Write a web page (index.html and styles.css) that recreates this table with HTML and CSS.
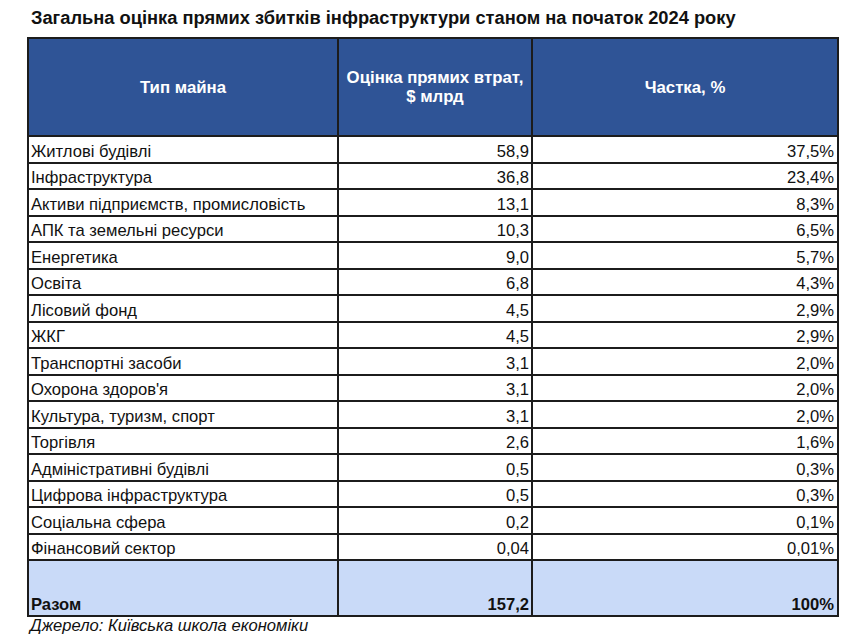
FILE: index.html
```html
<!DOCTYPE html>
<html lang="uk">
<head>
<meta charset="utf-8">
<title>Загальна оцінка прямих збитків інфраструктури</title>
<link rel="stylesheet" href="styles.css">
</head>
<body>
<div class="page">
  <h1 class="title">Загальна оцінка прямих збитків інфраструктури станом на початок 2024 року</h1>
  <div class="grid">
    <div class="hd">Тип майна</div>
    <div class="hd">Оцінка прямих втрат,<br>$ млрд</div>
    <div class="hd">Частка, %</div>

    <div class="c">Житлові будівлі</div><div class="c n">58,9</div><div class="c p">37,5%</div>
    <div class="c">Інфраструктура</div><div class="c n">36,8</div><div class="c p">23,4%</div>
    <div class="c">Активи підприємств, промисловість</div><div class="c n">13,1</div><div class="c p">8,3%</div>
    <div class="c">АПК та земельні ресурси</div><div class="c n">10,3</div><div class="c p">6,5%</div>
    <div class="c">Енергетика</div><div class="c n">9,0</div><div class="c p">5,7%</div>
    <div class="c">Освіта</div><div class="c n">6,8</div><div class="c p">4,3%</div>
    <div class="c">Лісовий фонд</div><div class="c n">4,5</div><div class="c p">2,9%</div>
    <div class="c">ЖКГ</div><div class="c n">4,5</div><div class="c p">2,9%</div>
    <div class="c">Транспортні засоби</div><div class="c n">3,1</div><div class="c p">2,0%</div>
    <div class="c">Охорона здоров'я</div><div class="c n">3,1</div><div class="c p">2,0%</div>
    <div class="c">Культура, туризм, спорт</div><div class="c n">3,1</div><div class="c p">2,0%</div>
    <div class="c">Торгівля</div><div class="c n">2,6</div><div class="c p">1,6%</div>
    <div class="c">Адміністративні будівлі</div><div class="c n">0,5</div><div class="c p">0,3%</div>
    <div class="c">Цифрова інфраструктура</div><div class="c n">0,5</div><div class="c p">0,3%</div>
    <div class="c">Соціальна сфера</div><div class="c n">0,2</div><div class="c p">0,1%</div>
    <div class="c">Фінансовий сектор</div><div class="c n">0,04</div><div class="c p">0,01%</div>

    <div class="c tot">Разом</div><div class="c n tot">157,2</div><div class="c p tot">100%</div>
  </div>
  <div class="source">Джерело: Київська школа економіки</div>
</div>
</body>
</html>
```

FILE: styles.css
```css
html, body {
  margin: 0;
  padding: 0;
  background: #ffffff;
}

.page {
  font-family: "Liberation Sans", Arial, sans-serif;
  color: #111111;
  padding: 7px 0 0 27px;
}

.title {
  margin: 0 0 0 4px;
  font-size: 18.3px;
  font-weight: bold;
  line-height: 21px;
  height: 30px;
  color: #111111;
}

.grid {
  display: grid;
  width: 812px;
  box-sizing: border-box;
  grid-template-columns: 308px 192px 304px;
  grid-template-rows: 96px repeat(16, 24.5px) 54px;
  gap: 2px;
  padding: 2px;
  background: #1c1c1c;
}

.hd {
  background: #2f5496;
  color: #ffffff;
  font-weight: bold;
  font-size: 16.8px;
  line-height: 19px;
  display: flex;
  align-items: center;
  justify-content: center;
  text-align: center;
}

.c {
  background: #ffffff;
  font-size: 16.6px;
  line-height: 18px;
  display: flex;
  align-items: flex-end;
  padding: 0 2px 1px 2px;
  white-space: nowrap;
}

.n {
  justify-content: flex-end;
}

.p {
  justify-content: flex-end;
  padding-right: 3px;
}

.tot {
  background: #c9daf8;
  font-weight: bold;
  padding-bottom: 1px;
}

.source {
  font-style: italic;
  font-size: 16.6px;
  line-height: 18px;
  margin: 0 0 0 3px;
  color: #111111;
}
```
